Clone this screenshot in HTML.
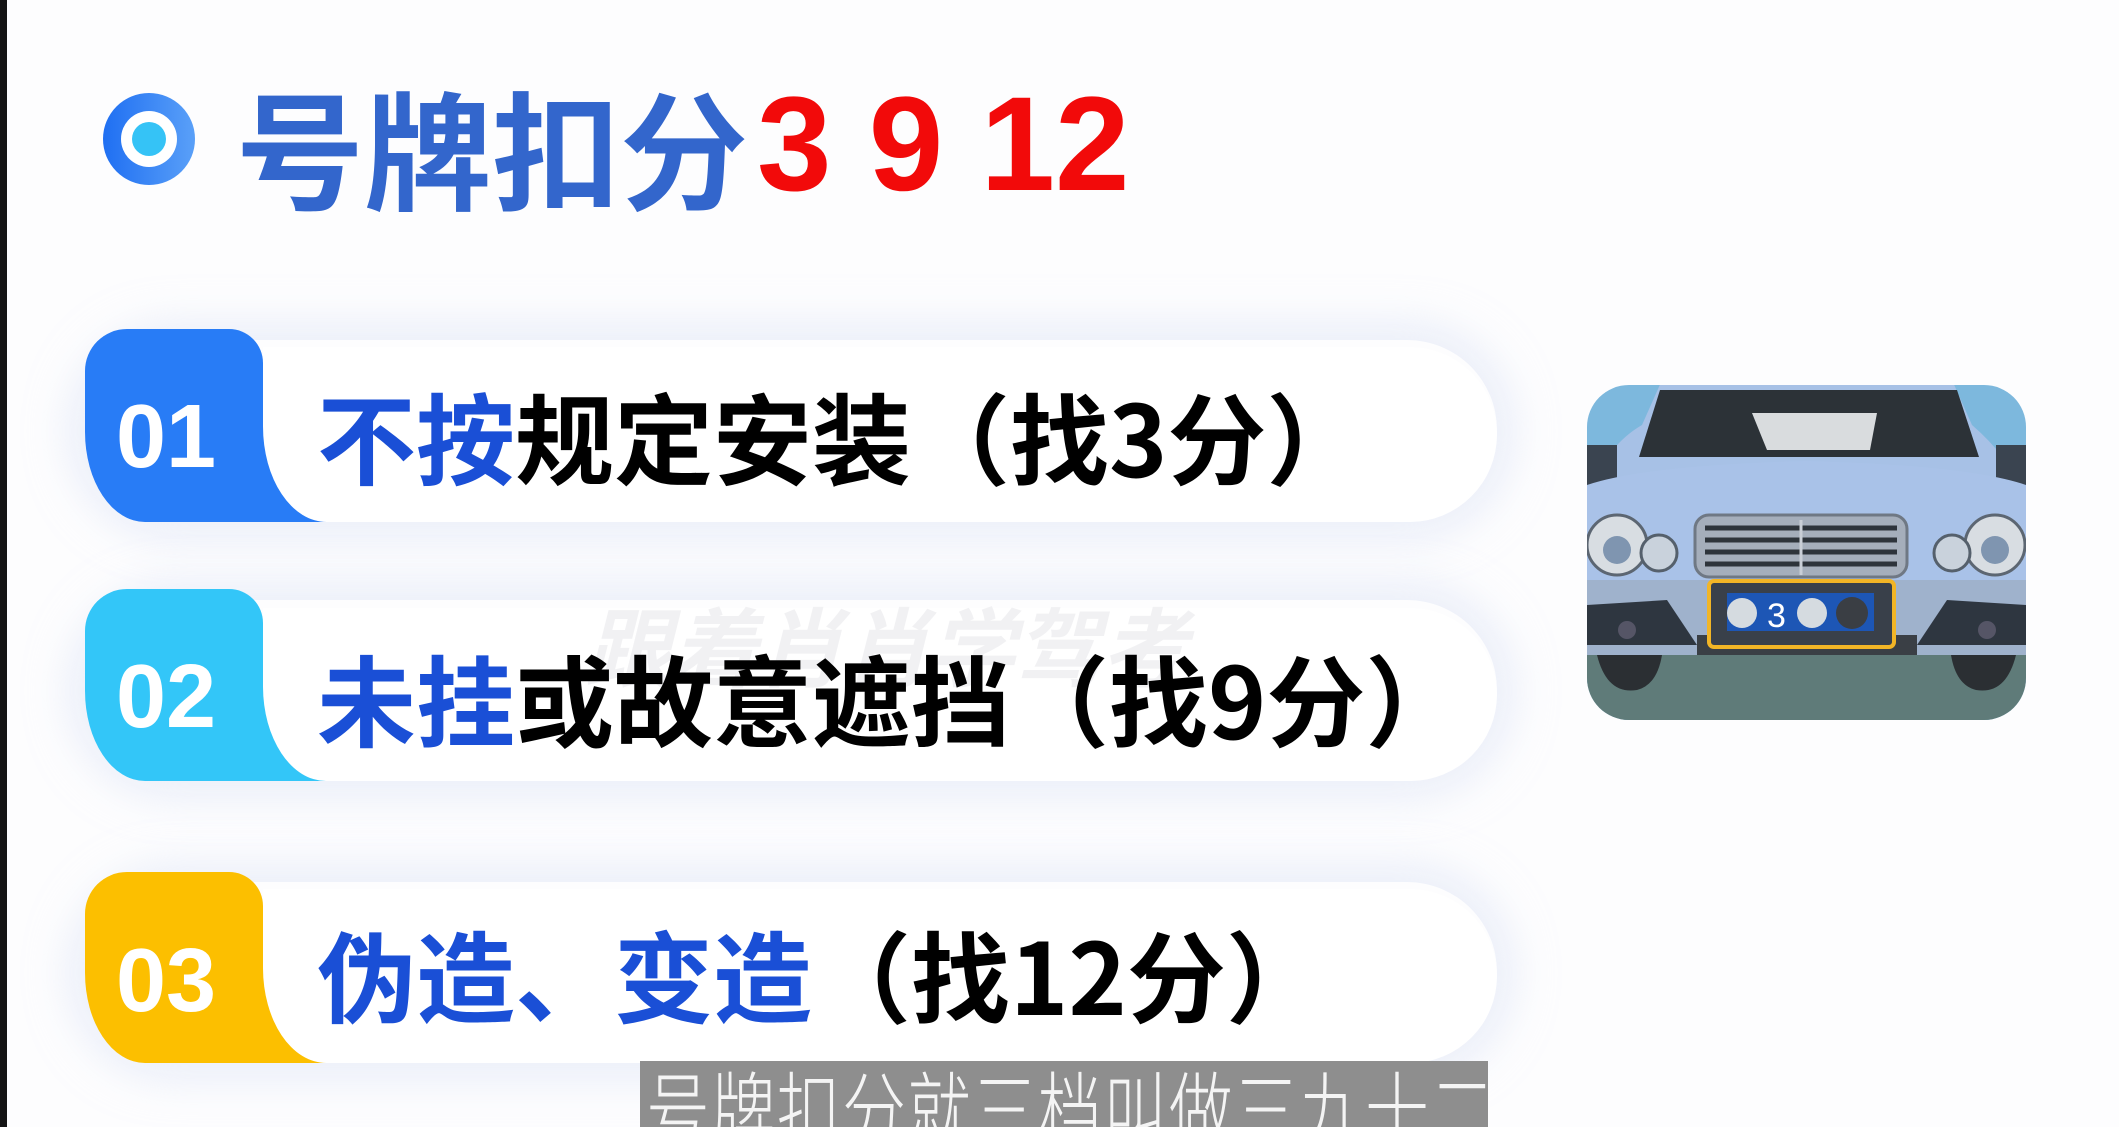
<!DOCTYPE html>
<html><head><meta charset="utf-8"><style>
*{margin:0;padding:0;box-sizing:border-box}
body{width:2119px;height:1127px;overflow:hidden;background:#fdfdfe;position:relative;font-family:"Liberation Sans","Noto Sans CJK SC",sans-serif}
.abs{position:absolute}
.edge{left:0;top:0;width:7px;height:1127px;background:#141414}
.title{left:236px;top:70px;font-size:128px;font-weight:700;color:#3366cc;line-height:150px;white-space:nowrap;font-family:"Noto Sans CJK SC",sans-serif}
.red{left:757px;top:70px;font-size:134px;font-weight:bold;color:#f20a0a;line-height:150px;white-space:nowrap;font-family:"Liberation Sans",sans-serif}
.glow{border-radius:90px;box-shadow:0 0 40px 18px rgba(220,228,245,.55)}
.pill{background:#fff;border-radius:0 88px 88px 64px/0 88px 88px 96px}
.badge{border-radius:42px 34px 0 60px/42px 34px 0 90px}
.num{color:#fff;font-weight:bold;font-size:90px;line-height:1;font-family:"Liberation Sans",sans-serif}
.txt{font-size:99px;font-weight:700;line-height:1;white-space:nowrap;font-family:"Noto Sans CJK SC",sans-serif;color:#000;letter-spacing:0}
.b{color:#1a4fd6}
.sub{left:640px;top:1061px;width:848px;height:66px;background:#8e8e8e;overflow:hidden}
.subt{position:absolute;left:6px;top:4px;font-size:84px;line-height:1;color:#f4f4f4;white-space:nowrap;font-family:"Noto Sans CJK SC",sans-serif;font-weight:300;transform:scaleX(.76);transform-origin:left top;letter-spacing:2px}
</style></head><body>
<div class="abs edge"></div>
<div class="abs" style="left:103px;top:93px;width:92px;height:92px;border-radius:50%;background:linear-gradient(90deg,#1f6ff2,#5aa0f8)"></div>
<div class="abs" style="left:121px;top:111px;width:56px;height:56px;border-radius:50%;background:#fff"></div>
<div class="abs" style="left:132px;top:122px;width:34px;height:34px;border-radius:50%;background:#35c3f6"></div>
<div class="abs title">号牌扣分</div>
<div class="abs red">3 9 12</div>

<div class="abs glow" style="left:85px;top:340px;width:1412px;height:182px"></div>
<div class="abs badge" style="left:85px;top:329px;width:178px;height:193px;background:#287cf6"></div>
<div class="abs" style="left:250px;top:420px;width:90px;height:102px;background:#287cf6"></div>
<div class="abs pill" style="left:263px;top:347px;width:1234px;height:175px"></div>
<div class="abs num" style="left:116px;top:392px">01</div>
<div class="abs txt" style="left:317px;top:385px"><span class="b">不按</span>规定安装（找3分）</div>

<div class="abs glow" style="left:85px;top:600px;width:1412px;height:181px"></div>
<div class="abs badge" style="left:85px;top:589px;width:178px;height:192px;background:#33c6f8"></div>
<div class="abs" style="left:250px;top:680px;width:90px;height:101px;background:#33c6f8"></div>
<div class="abs pill" style="left:263px;top:608px;width:1234px;height:173px"></div>
<div class="abs txt" style="left:585px;top:600px;color:#ececef;font-style:italic;opacity:.7;font-size:86px">跟着肖肖学驾考</div>
<div class="abs num" style="left:116px;top:652px">02</div>
<div class="abs txt" style="left:317px;top:647px"><span class="b">未挂</span>或故意遮挡（找9分）</div>

<div class="abs glow" style="left:85px;top:882px;width:1412px;height:181px"></div>
<div class="abs badge" style="left:85px;top:872px;width:178px;height:191px;background:#fcbf00"></div>
<div class="abs" style="left:250px;top:962px;width:90px;height:101px;background:#fcbf00"></div>
<div class="abs pill" style="left:263px;top:889px;width:1234px;height:174px"></div>
<div class="abs num" style="left:116px;top:936px">03</div>
<div class="abs txt" style="left:317px;top:923px"><span class="b">伪造、变造</span>（找12分）</div>

<svg class="abs" style="left:1587px;top:385px" width="439" height="335" viewBox="0 0 439 335">
<defs><clipPath id="c"><rect width="439" height="335" rx="42"/></clipPath></defs>
<g clip-path="url(#c)">
<rect width="439" height="335" fill="#7db8dd"/>
<rect y="100" width="439" height="40" fill="#7fb88a"/>
<path d="M0 300 V110 Q20 60 55 40 L75 -5 H365 L385 40 Q420 70 439 110 V300Z" fill="#a7c1e6"/>
<path d="M73 5 H370 L392 72 H52Z" fill="#2c3237"/>
<path d="M165 28 H290 L283 65 H180Z" fill="#d9dcde"/>
<path d="M0 60 H30 V100 H0Z" fill="#3a4450"/>
<path d="M409 60 H439 V100 H409Z" fill="#3a4450"/>
<path d="M0 100 Q60 80 219 76 Q380 80 439 100 V200 H0Z" fill="#a9c2e8"/>
<circle cx="30" cy="160" r="30" fill="#d8dde2" stroke="#5c6672" stroke-width="3"/>
<circle cx="30" cy="165" r="14" fill="#7f95b0"/>
<circle cx="72" cy="168" r="18" fill="#c9d2dc" stroke="#55606c" stroke-width="3"/>
<circle cx="408" cy="160" r="30" fill="#d8dde2" stroke="#5c6672" stroke-width="3"/>
<circle cx="408" cy="165" r="14" fill="#7f95b0"/>
<circle cx="365" cy="168" r="18" fill="#c9d2dc" stroke="#55606c" stroke-width="3"/>
<rect x="108" y="130" width="212" height="62" rx="14" fill="#a5aebb" stroke="#6f7884" stroke-width="3"/>
<g stroke="#2e343b" stroke-width="5"><line x1="118" y1="143" x2="310" y2="143"/><line x1="118" y1="155" x2="310" y2="155"/><line x1="118" y1="167" x2="310" y2="167"/><line x1="118" y1="179" x2="310" y2="179"/></g>
<line x1="214" y1="135" x2="214" y2="190" stroke="#c9ced6" stroke-width="3"/>
<path d="M0 195 H439 V270 H0Z" fill="#9fb2cc"/>
<path d="M0 220 L80 215 L110 260 H0Z" fill="#2e3640"/>
<path d="M439 220 L360 215 L330 260 H439Z" fill="#2e3640"/>
<circle cx="40" cy="245" r="9" fill="#556"/><circle cx="400" cy="245" r="9" fill="#556"/>
<rect x="110" y="250" width="220" height="20" fill="#3a3f45"/>
<rect x="122" y="196" width="185" height="66" rx="5" fill="#39404a" stroke="#f2b526" stroke-width="4"/>
<rect x="140" y="208" width="147" height="38" fill="#1d56b5"/>
<circle cx="155" cy="228" r="15" fill="#d5dbe0"/>
<circle cx="225" cy="228" r="15" fill="#d5dbe0"/>
<circle cx="265" cy="228" r="16" fill="#3a3e44"/>
<text x="180" y="242" font-family="Liberation Sans" font-size="34" fill="#fff">3</text>
<path d="M0 270 H439 V335 H0Z" fill="#5f7b79"/>
<path d="M10 270 Q20 310 50 305 Q70 300 75 270Z" fill="#2b2f33"/>
<path d="M429 270 Q419 310 389 305 Q369 300 364 270Z" fill="#2b2f33"/>
</g></svg>

<div class="abs sub"><div class="subt">号牌扣分就三档叫做三九十二</div></div>
</body></html>
